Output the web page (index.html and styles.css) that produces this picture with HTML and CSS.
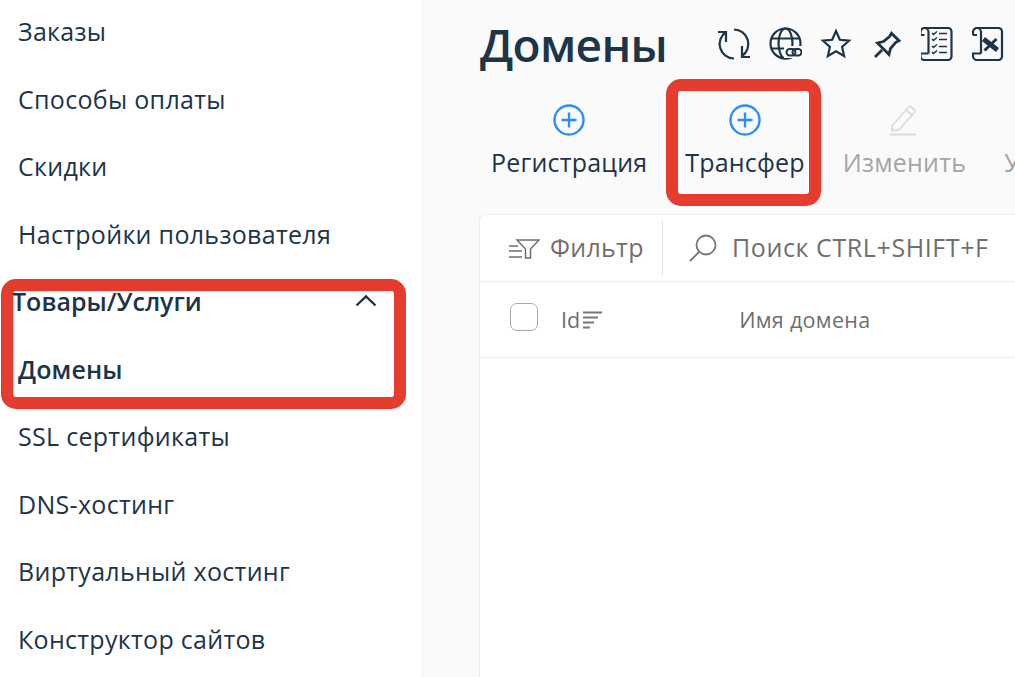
FILE: index.html
```html
<!DOCTYPE html>
<html lang="ru">
<head>
<meta charset="utf-8">
<title>Домены</title>
<link rel="stylesheet" href="styles.css">
</head>
<body>
<div class="app">
  <nav class="sidebar">
    <a class="nav-item">Заказы</a>
    <a class="nav-item">Способы оплаты</a>
    <a class="nav-item">Скидки</a>
    <a class="nav-item">Настройки пользователя</a>
    <a class="nav-item nav-group"><span>Товары/Услуги</span>
      <svg class="chevron" viewBox="0 0 22 13"><path d="M1.500 11.500 11 2.500l9.500 9"/></svg></a>
    <a class="nav-item nav-active">Домены</a>
    <a class="nav-item">SSL сертификаты</a>
    <a class="nav-item">DNS-хостинг</a>
    <a class="nav-item">Виртуальный хостинг</a>
    <a class="nav-item">Конструктор сайтов</a>
  </nav>
  <main class="main">
    <header class="title-row">
      <h1 class="title">Домены</h1>
      <div class="title-icons">
        <svg class="ticon" viewBox="0 0 34 34"><path d="M9 5A14.500 14.500 0 0 0 17 31.500M17 2.500A14.500 14.500 0 0 1 25 29M1 5h8v10M33 30h-8V19"/></svg>
        <svg class="ticon" viewBox="0 0 34 34"><circle cx="17.500" cy="16.500" r="15"/><ellipse cx="17.500" cy="16.500" rx="7" ry="15"/><path d="M3 11.500h29M3 21.500h18"/><rect class="knock" x="16" y="19" width="19" height="12"/><rect class="link" x="18.500" y="22" width="9" height="6.500" rx="3.200"/><rect class="link" x="24.500" y="22" width="9" height="6.500" rx="3.200"/></svg>
        <svg class="ticon" viewBox="0 0 34 34"><path d="m17 4 3.800 8.800 9.200.9-6.900 6.200 2 9.100-8.100-4.800-8.100 4.800 2-9.100L4 13.700l9.200-.9z"/></svg>
        <svg class="ticon pin" viewBox="-4 -5 34 34"><path d="M17.500 1.200 25 8.700l-3.500 1.800-5 6-1.500 6L3.500 11l6-1.500 6-5zM8 18l-7 7"/></svg>
        <svg class="ticon" viewBox="1 0 34 34"><path d="M4.500 1H28a3.500 3.500 0 0 1 3.500 3.500v25A3.500 3.500 0 0 1 28 33H4.500a4 4 0 0 1-4-4v-2.500h8M.5 8V5a4 4 0 0 1 8 0v21.500M.5 8h4"/><path class="thin" d="m12 6 1.500 1.500L17 4.500M19 6.500h8M12 12l1.500 1.500L17 10.500M19 12.500h8M12 19l1.500 1.500L17 17.500M19 19.500h8M12 25l1.500 1.500L17 23.500M19 25.500h8"/></svg>
        <svg class="ticon" viewBox="-0.500 0 34 34"><path d="M4.500 1H26a3.500 3.500 0 0 1 3.500 3.500v25A3.500 3.500 0 0 1 26 33H4.500a4 4 0 0 1-4-4v-2.500h8M.5 8V5a4 4 0 0 1 8 0v21.500M.5 8h4"/><path class="xbold" d="m11 12 14 11"/><path class="xthin" d="M24 12 12 23.500"/></svg>
      </div>
    </header>
    <div class="toolbar">
      <button class="tool">
        <svg class="tool-icon plus" viewBox="0 0 32 32"><circle cx="16" cy="16" r="14.500"/><path d="M16 8.500v15M8.500 16h15"/></svg>
        <span>Регистрация</span>
      </button>
      <button class="tool">
        <svg class="tool-icon plus" viewBox="0 0 32 32"><circle cx="16" cy="16" r="14.500"/><path d="M16 8.500v15M8.500 16h15"/></svg>
        <span>Трансфер</span>
      </button>
      <button class="tool tool-off">
        <svg class="tool-icon pencil" viewBox="0 0 32 32"><path d="M4 22 20 3.500a2.500 2.500 0 0 1 3.500-.3l2.500 2a2.500 2.500 0 0 1 .3 3.500L11 26l-7 .5zM18 6l6 5M2 30.500h26"/></svg>
        <span>Изменить</span>
      </button>
      <button class="tool tool-off">
        <span class="tool-icon"></span>
        <span>Удалить</span>
      </button>
    </div>
    <section class="card">
      <div class="filter-row">
        <div class="filter">
          <svg class="filter-icon" viewBox="0 0 32 22"><path d="M9 3h22l-8.500 9v9h-5v-9zM1 9h9M1 14h13M1 20h13"/></svg>
          <span>Фильтр</span>
        </div>
        <div class="search">
          <svg class="search-icon" viewBox="0 0 30 30"><circle cx="18" cy="12" r="9.500"/><path d="M11 19 2 28"/></svg>
          <span class="search-text">Поиск CTRL+SHIFT+F</span>
        </div>
      </div>
      <div class="table-head">
        <span class="check"></span>
        <span class="col-id">Id</span>
        <svg class="sort" viewBox="0 0 20 18"><path d="M0 1.500h19M0 6.500h15M0 11.500h11M0 16.500h7"/></svg>
        <span class="col-name">Имя домена</span>
      </div>
    </section>
  </main>
  <div class="mark mark-nav"></div>
  <div class="mark mark-tool"></div>
</div>
</body>
</html>
```
FILE: styles.css
```css
html, body { margin: 0; height: 100%; overflow: hidden; }
body { font-family: "Open Sans", "Noto Sans", sans-serif; color: #1d3449; background: #fafafa; }
.app { position: relative; display: flex; height: 677px; overflow: hidden; }

.sidebar { width: 422px; flex: none; box-sizing: border-box; padding: 0 18px; margin-top: -2.500px; background: #fff; box-shadow: 1px 0 0 #f0f0f0; }
.nav-item { display: flex; align-items: center; height: 67.500px; font-size: 25px; letter-spacing: .3px; color: #1d3449; white-space: nowrap; }
.nav-group { justify-content: space-between; font-weight: 600; letter-spacing: 0; padding-right: 27px; margin-left: -6px; }
.nav-active { font-weight: 600; letter-spacing: .1px; }
.chevron { width: 22px; height: 13px; margin-bottom: 1px; fill: none; stroke: #1d3449; stroke-width: 2.400; }

.main { flex: 1; min-width: 0; padding-left: 58px; }
.title-row { display: flex; align-items: center; height: 88px; }
.title { margin: 0; width: 188px; flex: none; font-size: 46px; font-weight: 600; letter-spacing: -.7px; line-height: 1; color: #1d3449; }
.title-icons { display: flex; gap: 17px; margin-left: 49px; }
.ticon { width: 34px; height: 34px; flex: none; fill: none; stroke: #1d3449; stroke-width: 2.200; }
.ticon .thin { stroke-width: 1.400; }
.ticon .xbold { stroke-width: 5; }
.ticon .xthin { stroke-width: 3; }
.ticon .knock { fill: #fafafa; stroke: none; }
.ticon .link { stroke-width: 2; }
.pin { stroke-width: 2.800; }

.toolbar { display: flex; height: 126px; box-sizing: border-box; padding-top: 16px; margin-left: 11px; gap: 38px; }
.tool { display: flex; flex-direction: column; align-items: center; flex: none; gap: 10px; padding: 0; border: 0; background: none; font: inherit; font-size: 25px; letter-spacing: .2px; color: #1d3449; line-height: 32px; }
.tool-icon { display: block; width: 32px; height: 32px; fill: none; }
.plus { stroke: #2f8dfa; stroke-width: 2.400; }
.pencil { stroke: #dcdcdc; stroke-width: 1.800; }
.tool-off { color: #a5a5a5; }

.card { margin-left: -1px; height: 520px; box-sizing: border-box; background: #fff; border: 1px solid #eeeeee; border-right: 0; border-radius: 6px 0 0 0; }
.filter-row { display: flex; align-items: center; height: 66px; border-bottom: 1px solid #eeeeee; font-size: 25px; letter-spacing: .3px; line-height: 32px; color: #6f6f6f; white-space: nowrap; }
.filter { display: flex; align-items: center; gap: 10px; width: 183px; height: 56px; box-sizing: border-box; padding-left: 28px; border-right: 1px solid #e3e3e3; }
.filter span, .search-text { margin-bottom: 2px; }
.filter-icon { width: 32px; height: 22px; flex: none; fill: none; stroke: #6f6f6f; stroke-width: 1.500; }
.search { display: flex; align-items: center; gap: 14px; padding-left: 25px; }
.search-text { letter-spacing: .6px; }
.search-icon { width: 30px; height: 30px; flex: none; fill: none; stroke: #777; stroke-width: 1.800; }
.table-head { display: flex; align-items: center; height: 75px; border-bottom: 1px solid #eeeeee; font-size: 21.500px; color: #6f6f6f; }
.check { width: 28px; height: 28px; box-sizing: border-box; margin-left: 30px; margin-bottom: 6px; border: 1px solid #a8a8a8; border-radius: 7px; }
.col-id { margin-left: 23px; }
.sort { width: 20px; height: 18px; margin-left: 3px; fill: none; stroke: #777; stroke-width: 2; }
.col-name { margin-left: 136px; letter-spacing: .3px; }

.mark { position: absolute; box-sizing: border-box; border: 12px solid #e63c2f; border-radius: 15px; }
.mark-nav { left: 1px; top: 279px; width: 405px; height: 130px; }
.mark-tool { left: 666px; top: 79px; width: 155px; height: 127px; }
```
